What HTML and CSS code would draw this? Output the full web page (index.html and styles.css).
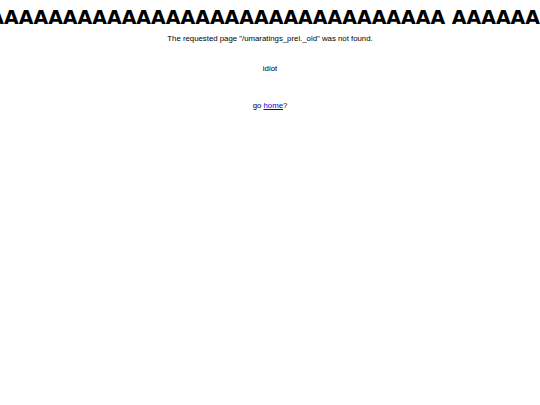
FILE: index.html
```html
<!DOCTYPE html>
<html lang="en">
<head>
  <meta charset="UTF-8">
  <title>404 Not Found</title>
  <link rel="stylesheet" href="styles.css">
</head>
<body>
  <div class="scream">
    <span>AAAAAAAAAAAAAAAAAAAAAAAAAAAAAAA AAAAAAA</span>
  </div>

  <p class="msg">The requested page "/umaratings_prel._old" was not found.</p>
  <p class="insult">idiot</p>
  <p class="back">go <a href="/">home</a>?</p>
</body>
</html>
```

FILE: styles.css
```css
html, body {
  margin: 0;
  background: #fff;
  overflow: hidden;
}

body {
  font-family: "Liberation Sans", Arial, sans-serif;
  color: #000;
  font-size: 7.8px;
  text-align: center;
}

.scream {
  display: flex;
  align-items: center;
  height: 34px;
  overflow: hidden;
  white-space: nowrap;
  font-family: "DejaVu Sans", Verdana, sans-serif;
  font-size: 19px;
  font-weight: bold;
}

.scream span {
  margin-left: -10.7px;
}

.msg {
  margin: 0;
}

.insult {
  margin: 21px 0 0;
}

.back {
  margin: 28px 0 0;
}

a {
  color: #00e;
}
```
